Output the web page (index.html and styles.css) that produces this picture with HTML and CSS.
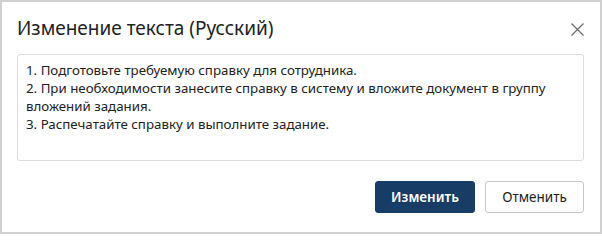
FILE: index.html
```html
<!DOCTYPE html>
<html lang="ru">
<head>
<meta charset="utf-8">
<link rel="stylesheet" href="styles.css">
</head>
<body>
<div class="dialog">
  <div class="header">
    <h1 class="title">Изменение текста (Русский)</h1>
    <button class="close" aria-label="Закрыть">
      <svg width="13" height="13" viewBox="0 0 13 13"><path d="M0.5 0.5 L12.5 12.5 M12.5 0.5 L0.5 12.5" stroke="#6b6f73" stroke-width="1.3" fill="none"/></svg>
    </button>
  </div>
  <div class="body">
    <div class="textarea">1. Подготовьте требуемую справку для сотрудника.<br>2. При необходимости занесите справку в систему и вложите документ в группу вложений задания.<br>3. Распечатайте справку и выполните задание.</div>
  </div>
  <div class="footer">
    <button class="btn btn-primary">Изменить</button>
    <button class="btn btn-secondary">Отменить</button>
  </div>
</div>
</body>
</html>
```

FILE: styles.css
```css
html, body {
  margin: 0;
  padding: 0;
  background: #ffffff;
}
.dialog {
  width: 602px;
  height: 234px;
  box-sizing: border-box;
  border: 2px solid #d0d0d0;
  background: #fff;
  font-family: "Noto Sans", "Open Sans", sans-serif;
  color: #222;
  display: flex;
  flex-direction: column;
}
.header {
  display: flex;
  align-items: center;
  justify-content: space-between;
  padding: 12px 16px 0 15px;
  height: 40px;
  box-sizing: border-box;
}
.title {
  margin: 0;
  font-size: 19px;
  font-weight: 400;
  color: #222;
  line-height: 26px;
}
.close {
  border: 0;
  background: none;
  padding: 0;
  width: 13px;
  height: 13px;
  display: flex;
  margin-top: 2px;
}
.body {
  padding: 12px 16px 0 15px;
}
.textarea {
  box-sizing: border-box;
  height: 107px;
  border: 1px solid #dcdcdc;
  border-radius: 3px;
  padding: 6px 8px;
  font-size: 13.3px;
  line-height: 18px;
  color: #222;
}
.footer {
  display: flex;
  justify-content: flex-end;
  gap: 10px;
  padding: 20px 16px 0 0;
}
.btn {
  height: 32px;
  box-sizing: border-box;
  border-radius: 3px;
  font-family: "Noto Sans", sans-serif;
  font-size: 13.5px;
  padding: 0;
}
.btn-primary {
  width: 100px;
  background: #173d66;
  border: 1px solid #173d66;
  color: #fff;
  font-weight: 600;
}
.btn-secondary {
  width: 99px;
  background: #fff;
  border: 1px solid #c8c8c8;
  color: #222;
}
```
